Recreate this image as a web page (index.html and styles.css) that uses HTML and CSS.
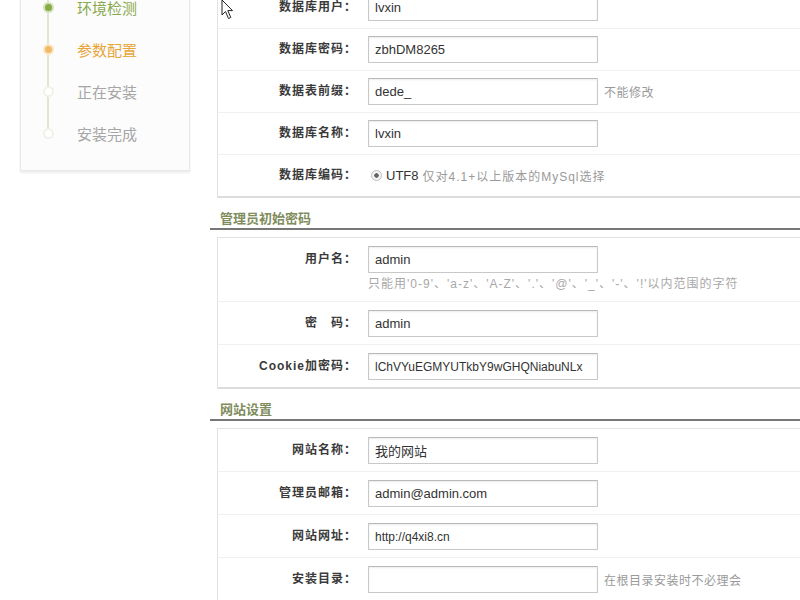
FILE: index.html
```html
<!DOCTYPE html>
<html lang="zh-CN">
<head>
    <meta charset="UTF-8">
    <title>DedeCMS 安装向导 - 参数配置</title>
    <link rel="stylesheet" href="styles.css">
</head>
<body>
    <div class="page">
        <!-- 左侧步骤 -->
        <div class="steps">
            <ul>
                <li class="done"><span class="dot"></span>环境检测</li>
                <li class="current"><span class="dot"></span>参数配置</li>
                <li><span class="dot"></span>正在安装</li>
                <li><span class="dot"></span>安装完成</li>
            </ul>
        </div>

        <div class="main">
            <div class="box box-db">
                <div class="row">
                    <div class="label">数据库用户：</div>
                    <div class="field"><input type="text" value="lvxin"></div>
                </div>
                <div class="row">
                    <div class="label">数据库密码：</div>
                    <div class="field"><input type="text" value="zbhDM8265"></div>
                </div>
                <div class="row">
                    <div class="label">数据表前缀：</div>
                    <div class="field"><input type="text" value="dede_"><span class="note">不能修改</span></div>
                </div>
                <div class="row">
                    <div class="label">数据库名称：</div>
                    <div class="field"><input type="text" value="lvxin"></div>
                </div>
                <div class="row">
                    <div class="label">数据库编码：</div>
                    <div class="field radio-field"><span class="radio"></span><span class="charset">UTF8</span><span class="note wide">仅对4.1+以上版本的MySql选择</span></div>
                </div>
            </div>

            <h3 class="section-title">管理员初始密码</h3>
            <div class="box">
                <div class="row">
                    <div class="label">用户名：</div>
                    <div class="field">
                        <input type="text" value="admin">
                        <div class="hint">只能用'0-9'、'a-z'、'A-Z'、'.'、'@'、'_'、'-'、'!'以内范围的字符</div>
                    </div>
                </div>
                <div class="row">
                    <div class="label">密&nbsp;&nbsp;&nbsp;码：</div>
                    <div class="field"><input type="text" value="admin"></div>
                </div>
                <div class="row">
                    <div class="label">Cookie加密码：</div>
                    <div class="field"><input type="text" class="small" value="lChVYuEGMYUTkbY9wGHQNiabuNLx"></div>
                </div>
            </div>

            <h3 class="section-title">网站设置</h3>
            <div class="box">
                <div class="row">
                    <div class="label">网站名称：</div>
                    <div class="field"><input type="text" value="我的网站"></div>
                </div>
                <div class="row">
                    <div class="label">管理员邮箱：</div>
                    <div class="field"><input type="text" value="admin@admin.com"></div>
                </div>
                <div class="row">
                    <div class="label">网站网址：</div>
                    <div class="field"><input type="text" class="small" value="http://q4xi8.cn"></div>
                </div>
                <div class="row">
                    <div class="label">安装目录：</div>
                    <div class="field"><input type="text" value=""><span class="note">在根目录安装时不必理会</span></div>
                </div>
            </div>
        </div>

        <!-- 鼠标指针 -->
        <svg class="cursor" width="14" height="22" viewBox="0 0 14 22">
            <path d="M1 1 L1 16 L4.5 12.5 L7.5 19.5 L9.8 18.5 L6.8 11.6 L11.5 11.6 Z" fill="#fff" stroke="#222" stroke-width="1" stroke-linejoin="round"/>
        </svg>
    </div>
</body>
</html>
```

FILE: styles.css
```css
/* 安装向导 - 参数配置页 */
html {
    overflow: hidden;
}

body {
    margin: 0;
    background-color: #fff;
    font-family: "Liberation Sans", "Noto Sans CJK SC", sans-serif;
    font-size: 12px;
    color: #333;
}

.page {
    position: relative;
    display: flex;
    align-items: flex-start;
    margin-top: -14px;
}

/* 左侧步骤条 */
.steps {
    width: 168px;
    flex-shrink: 0;
    margin-left: 20px;
    border: 1px solid #e8e8e8;
    border-top: none;
    background-color: #fcfcfc;
    padding-bottom: 16px;
    box-shadow: 0 2px 2px #ececec;
}

.steps ul {
    list-style: none;
    margin: 0;
    padding: 0;
    background: linear-gradient(#dfe8d2, #dfe8d2) no-repeat 26px 0 / 2px 150px;
}

.steps li {
    display: flex;
    align-items: center;
    height: 42px;
    font-size: 15px;
    color: #a6a6a6;
}

.steps .dot {
    box-sizing: border-box;
    width: 11px;
    height: 11px;
    margin-left: 22px;
    margin-right: 23px;
    border-radius: 50%;
    background-color: #fff;
    border: 2px solid #eef2e8;
}

.steps li.done {
    color: #89a94c;
}

.steps li.done .dot {
    background-color: #86ab47;
    border-color: #d3e2bb;
}

.steps li.current {
    color: #e7a53a;
}

.steps li.current .dot {
    background-color: #efbb6a;
    border-color: #fbe6c4;
}

/* 主体表单：右侧在截图外 */
.main {
    width: 590px;
    margin-left: 20px;
    flex-shrink: 0;
}

.box {
    margin-left: 7px;
    border: 1px solid #e2e2e2;
    border-right: none;
    border-bottom: 2px solid #dcdcdc;
    background-color: #fff;
}

.row {
    display: flex;
    align-items: flex-start;
    padding: 8px 0 7px;
    border-bottom: 1px solid #f1f1f1;
}

.box-db .row {
    padding: 7px 0 7px;
}

.row:last-child {
    border-bottom: none;
}

.label {
    box-sizing: border-box;
    width: 150px;
    padding-right: 11px;
    text-align: right;
    line-height: 27px;
    font-weight: bold;
    letter-spacing: 1px;
    color: #3a3a3a;
    flex-shrink: 0;
}

.field {
    display: flex;
    flex-wrap: wrap;
    align-items: center;
    width: 430px;
}

.field input {
    box-sizing: border-box;
    width: 230px;
    height: 27px;
    padding: 0 6px;
    border: 1px solid #c8c8c8;
    border-top-color: #b9b9b9;
    border-radius: 1px;
    box-shadow: inset 0 1px 2px rgba(0, 0, 0, 0.08);
    font-family: "Liberation Sans", "Noto Sans CJK SC", sans-serif;
    font-size: 13px;
    color: #333;
    background-color: #fff;
}

.field input.small {
    font-size: 12px;
}

.note {
    margin-left: 6px;
    color: #9a9a9a;
    font-size: 12px;
    letter-spacing: 0.5px;
}

.hint {
    width: 100%;
    margin-top: 1px;
    line-height: 20px;
    color: #a8a8a8;
    font-size: 12px;
    letter-spacing: 1px;
}

.radio-field {
    height: 27px;
}

.radio {
    box-sizing: border-box;
    width: 11px;
    height: 11px;
    margin-left: 3px;
    margin-right: 4px;
    border: 1px solid #bdbdbd;
    border-radius: 50%;
    background: radial-gradient(circle, #666 0 2px, #f4f4f4 2.5px);
}

.charset {
    font-size: 13px;
    color: #333;
}

.radio-field .note {
    margin-left: 4px;
}

.note.wide {
    letter-spacing: 1px;
}

.section-title {
    margin: 11px 0 7px;
    padding-left: 10px;
    line-height: 19px;
    font-size: 13px;
    font-weight: bold;
    color: #7f8d5d;
    border-bottom: 2px solid #777;
}

/* 截图里的鼠标指针 */
.cursor {
    position: absolute;
    left: 221px;
    top: 13px;
}
```
